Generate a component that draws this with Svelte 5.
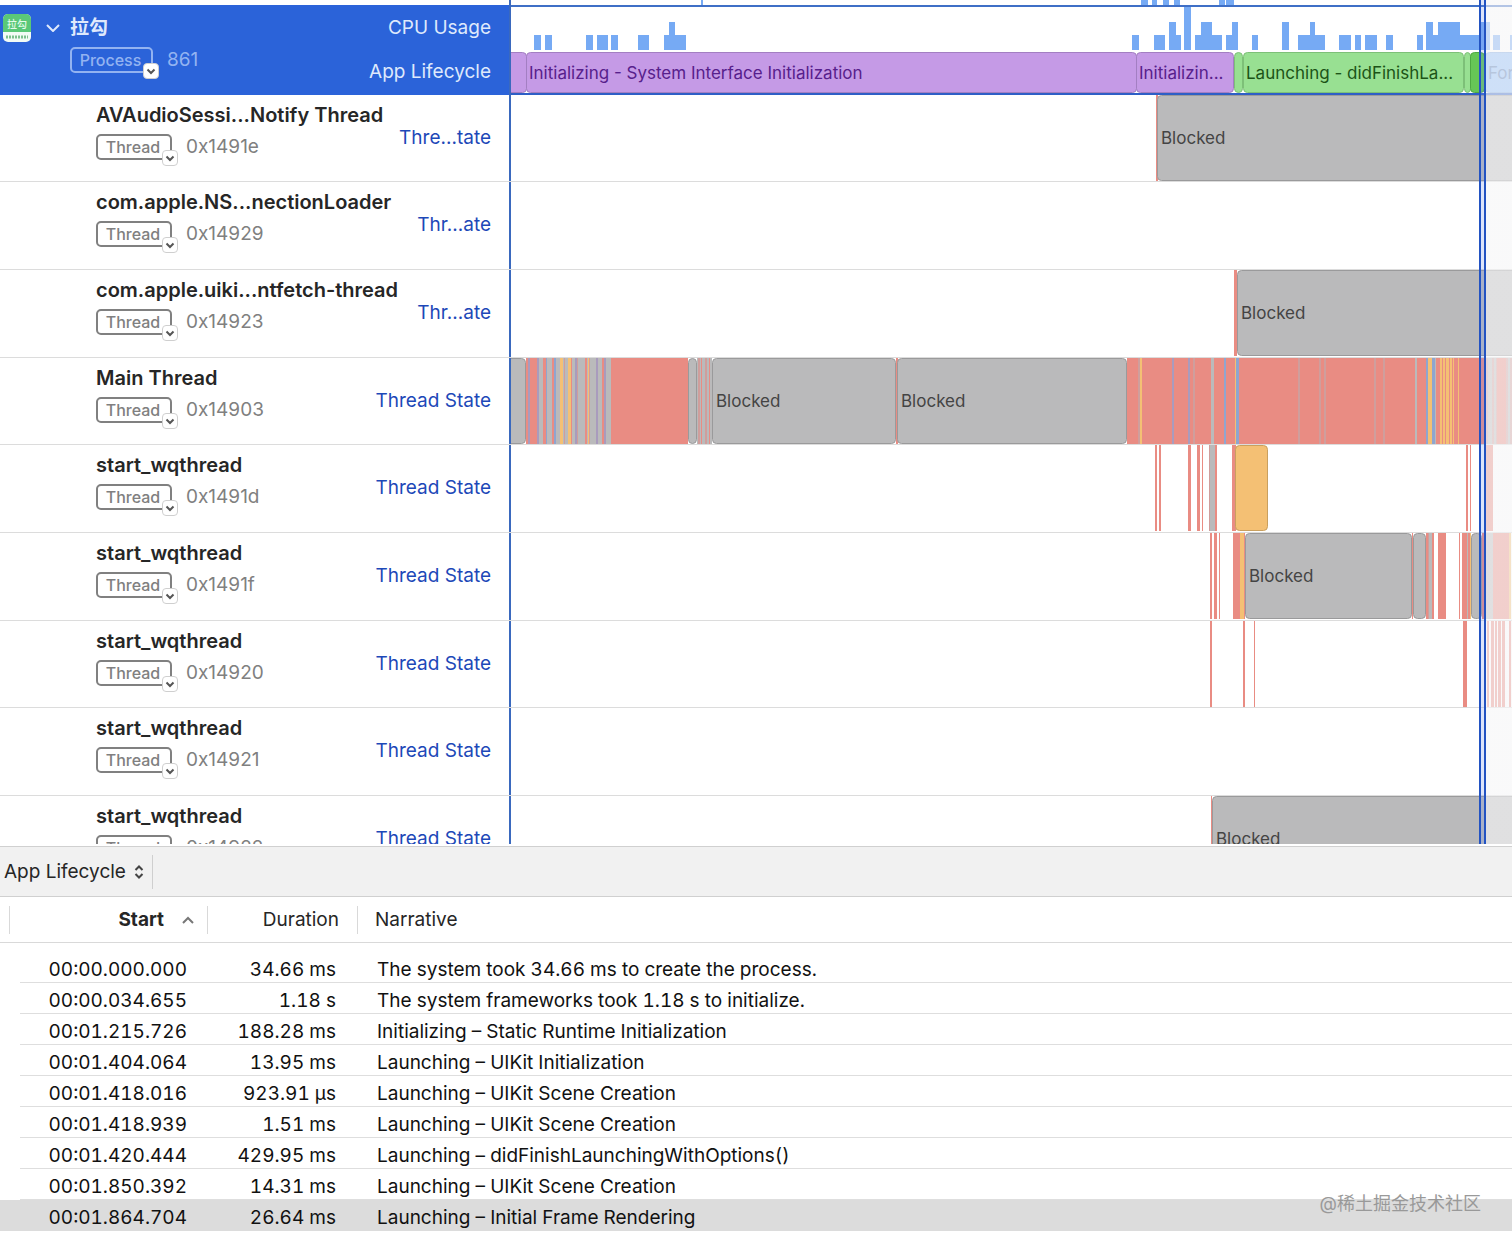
<script>
  // timeline positions are in pixels, the lanes begin right of the label column
  const ORIGIN = 511;
  const LANE_HEIGHT = 86;

  const colors = {
    running: '#e98c83',
    blocked: '#bababb',
    runnable: '#f4c074',
    preempted: '#a99bbd',
    interrupted: '#8fa5cf',
    faint: '#cf9e9c'
  };

  // [x, width, height]
  const cpuBars = [
    [534, 7, 15], [545, 7, 15], [586, 7, 15], [597, 11, 15], [611, 7, 15], [638, 11, 15],
    [664, 22, 15], [669, 6, 28], [1132, 7, 15], [1154, 11, 15], [1169, 7, 28], [1176, 5, 15],
    [1184, 7, 43], [1195, 27, 15], [1201, 11, 28], [1226, 12, 15], [1232, 6, 28], [1252, 6, 15],
    [1282, 7, 28], [1298, 27, 15], [1310, 5, 28], [1339, 12, 15], [1355, 6, 15], [1365, 12, 15],
    [1386, 7, 15], [1417, 6, 15], [1426, 55, 15], [1426, 7, 28], [1438, 22, 28], [1481, 9, 28],
    [1493, 7, 15], [1510, 7, 15]
  ];

  const previousBars = [
    [701, 2], [1141, 7], [1152, 5], [1163, 6], [1174, 6], [1219, 6], [1226, 8]
  ];

  const phases = [
    { x: 505, w: 21, kind: 'init', label: '' },
    { x: 526, w: 610, kind: 'init', label: 'Initializing - System Interface Initialization' },
    { x: 1136, w: 97, kind: 'init', label: 'Initializin...' },
    { x: 1234, w: 8, kind: 'launch', label: '' },
    { x: 1243, w: 220, kind: 'launch', label: 'Launching - didFinishLa...' },
    { x: 1464, w: 6, kind: 'launch', label: '' },
    { x: 1470, w: 14, kind: 'frame', label: '' },
    { x: 1485, w: 400, kind: 'foreground', label: 'Foreground - Active' }
  ];

  // stripes: [x, width, state], blocks: [x, width, state, label]
  const threads = [
    {
      name: 'AVAudioSessi...Notify Thread', id: '0x1491e', state: 'Thre...tate',
      stripes: [[1156, 2, 'running']],
      blocks: [[1157, 800, 'blocked', 'Blocked']]
    },
    { name: 'com.apple.NS...nectionLoader', id: '0x14929', state: 'Thr...ate', stripes: [], blocks: [] },
    {
      name: 'com.apple.uiki...ntfetch-thread', id: '0x14923', state: 'Thr...ate',
      stripes: [[1234, 3, 'running']],
      blocks: [[1237, 800, 'blocked', 'Blocked']]
    },
    {
      name: 'Main Thread', id: '0x14903', state: 'Thread State',
      stripes: [
        [526, 80, 'blocked'],
        [526, 11, 'running'], [528, 2, 'preempted'], [537, 2, 'preempted'], [543, 3, 'running'],
        [546, 1, 'interrupted'], [552, 2, 'running'], [554, 2, 'interrupted'], [560, 3, 'runnable'],
        [564, 1, 'faint'], [568, 3, 'runnable'], [571, 1, 'running'], [575, 3, 'preempted'],
        [577, 1, 'faint'], [585, 2, 'running'], [588, 2, 'runnable'], [589, 1, 'faint'],
        [596, 2, 'preempted'], [602, 2, 'running'], [604, 2, 'preempted'],
        [606, 5, 'blocked'], [611, 77, 'running'],
        [697, 15, 'blocked'], [698, 2, 'faint'], [701, 1, 'running'], [705, 2, 'faint'],
        [709, 1, 'running'], [896, 2, 'running'],
        [1127, 358, 'running'], [1138, 2, 'faint'], [1140, 2, 'runnable'], [1172, 2, 'preempted'],
        [1188, 2, 'preempted'], [1193, 2, 'faint'], [1211, 3, 'blocked'], [1224, 2, 'interrupted'],
        [1235, 1, 'runnable'], [1236, 3, 'interrupted'], [1298, 2, 'faint'], [1319, 2, 'faint'],
        [1324, 2, 'faint'], [1374, 2, 'faint'], [1383, 2, 'faint'], [1415, 2, 'blocked'],
        [1426, 2, 'interrupted'], [1428, 4, 'runnable'], [1432, 3, 'interrupted'], [1435, 1, 'blocked'],
        [1440, 2, 'runnable'], [1443, 2, 'runnable'], [1446, 3, 'runnable'], [1450, 2, 'runnable'],
        [1453, 1, 'runnable'], [1458, 1, 'runnable'], [1486, 26, 'faint'], [1488, 4, 'blocked'],
        [1494, 2, 'blocked'], [1497, 9, 'running'], [1508, 2, 'blocked']
      ],
      blocks: [
        [505, 21, 'blocked', ''], [688, 9, 'blocked', ''],
        [712, 184, 'blocked', 'Blocked'], [897, 230, 'blocked', 'Blocked']
      ]
    },
    {
      name: 'start_wqthread', id: '0x1491d', state: 'Thread State',
      stripes: [
        [1155, 2, 'running'], [1159, 2, 'running'], [1188, 3, 'running'], [1197, 3, 'running'],
        [1202, 1, 'running'], [1209, 6, 'blocked'], [1215, 2, 'running'], [1209, 1, 'faint'],
        [1232, 4, 'running'], [1466, 2, 'running'], [1470, 1, 'running'], [1486, 7, 'running']
      ],
      blocks: [[1235, 33, 'runnable', '']]
    },
    {
      name: 'start_wqthread', id: '0x1491f', state: 'Thread State',
      stripes: [
        [1210, 2, 'running'], [1214, 3, 'running'], [1219, 1, 'running'], [1233, 7, 'running'],
        [1240, 4, 'runnable'], [1244, 1, 'running'], [1412, 1, 'running'], [1426, 2, 'running'],
        [1428, 4, 'blocked'], [1428, 1, 'faint'], [1432, 2, 'running'], [1438, 8, 'running'],
        [1459, 1, 'running'], [1462, 5, 'running'], [1467, 1, 'blocked'], [1468, 2, 'running'],
        [1470, 1, 'runnable'], [1482, 3, 'running'], [1486, 7, 'blocked'], [1493, 16, 'running'],
        [1509, 2, 'runnable']
      ],
      blocks: [
        [1245, 167, 'blocked', 'Blocked'], [1413, 13, 'blocked', ''], [1471, 11, 'blocked', '']
      ]
    },
    {
      name: 'start_wqthread', id: '0x14920', state: 'Thread State',
      stripes: [
        [1210, 2, 'running'], [1243, 2, 'running'], [1254, 1, 'running'], [1463, 4, 'running'],
        [1487, 2, 'running'], [1491, 3, 'running'], [1495, 2, 'running'], [1498, 3, 'running'],
        [1502, 3, 'running'], [1509, 2, 'running']
      ],
      blocks: []
    },
    { name: 'start_wqthread', id: '0x14921', state: 'Thread State', stripes: [], blocks: [] },
    {
      name: 'start_wqthread', id: '0x14922', state: 'Thread State',
      stripes: [[1211, 1, 'running']],
      blocks: [[1212, 800, 'blocked', 'Blocked']]
    }
  ];

  const events = [
    { start: '00:00.000.000', duration: '34.66 ms', narrative: 'The system took 34.66 ms to create the process.' },
    { start: '00:00.034.655', duration: '1.18 s', narrative: 'The system frameworks took 1.18 s to initialize.' },
    { start: '00:01.215.726', duration: '188.28 ms', narrative: 'Initializing – Static Runtime Initialization' },
    { start: '00:01.404.064', duration: '13.95 ms', narrative: 'Launching – UIKit Initialization' },
    { start: '00:01.418.016', duration: '923.91 µs', narrative: 'Launching – UIKit Scene Creation' },
    { start: '00:01.418.939', duration: '1.51 ms', narrative: 'Launching – UIKit Scene Creation' },
    { start: '00:01.420.444', duration: '429.95 ms', narrative: 'Launching – didFinishLaunchingWithOptions()' },
    { start: '00:01.850.392', duration: '14.31 ms', narrative: 'Launching – UIKit Scene Creation' },
    { start: '00:01.864.704', duration: '26.64 ms', narrative: 'Launching – Initial Frame Rendering' }
  ];

  let selected = $state(8);
</script>

{#snippet kindButton(label)}
  <button class="kind">
    {label}
    <svg class="kind-arrow" viewBox="0 0 16 16" aria-hidden="true">
      <rect x="0.5" y="0.5" width="15" height="15" rx="3.5" />
      <path d="M4.5 6.5 8 10l3.5-3.5" />
    </svg>
  </button>
{/snippet}

<div class="instruments">
  <section class="trace">
    <div class="row previous">
      <div class="labels"></div>
      <svg class="lane">
        {#each previousBars as [x, w]}
          <rect x={x - ORIGIN} y="0" width={w} height="5" fill="#76aaf4" />
        {/each}
      </svg>
    </div>

    <div class="row process">
      <div class="labels">
        <svg class="app-icon" viewBox="0 0 28 28" aria-hidden="true">
          <rect width="28" height="28" rx="5" fill="#f2fbf5" />
          <path d="M0 18V5a5 5 0 0 1 5-5h18a5 5 0 0 1 5 5v13z" fill="#5ac878" />
          <text x="14" y="14" text-anchor="middle" font-size="10" font-weight="500" fill="#e4fbea">拉勾</text>
          <path d="M3 23h22" stroke="#7cc18f" stroke-width="3" stroke-dasharray="2 1" />
        </svg>
        <button class="disclosure" aria-label="Collapse process">
          <svg viewBox="0 0 14 8" aria-hidden="true"><path d="m1 1 6 6 6-6" /></svg>
        </button>
        <div class="info">
          <strong>拉勾</strong>
          <div class="meta">{@render kindButton('Process')}<span>861</span></div>
        </div>
        <div class="tracks">
          <span>CPU Usage</span>
          <span>App Lifecycle</span>
        </div>
      </div>
      <svg class="lane">
        {#each cpuBars as [x, w, h]}
          <rect x={x - ORIGIN} y={43 - h} width={w} height={h} fill="#76aaf4" />
        {/each}
        {#each phases as p}
          <g class="phase {p.kind}">
            <rect x={p.x - ORIGIN + 0.5} y="45.5" width={p.w} height="40" rx="4" />
            <text x={p.x - ORIGIN + 3} y="72">{p.label}</text>
          </g>
        {/each}
      </svg>
    </div>

    {#each threads as t}
      <div class="row thread">
        <div class="labels">
          <div class="info">
            <strong>{t.name}</strong>
            <div class="meta">{@render kindButton('Thread')}<span>{t.id}</span></div>
          </div>
          <a class="state" href="#thread-state">{t.state}</a>
        </div>
        <svg class="lane">
          {#each t.stripes as [x, w, state]}
            <rect x={x - ORIGIN} y="0" width={w} height={LANE_HEIGHT} fill={colors[state]} />
          {/each}
          {#each t.blocks as [x, w, state, label]}
            <rect class="block {state}" x={x - ORIGIN + 0.5} y="0.5" width={w - 1} height={LANE_HEIGHT - 1} rx="4" fill={colors[state]} />
            <text class="block-label" x={x - ORIGIN + 4} y="49">{label}</text>
          {/each}
        </svg>
      </div>
    {/each}

    <div class="playhead"></div>
  </section>

  <section class="detail">
    <div class="toolbar">
      <label class="picker">
        <select aria-label="Detail view">
          <option>App Lifecycle</option>
        </select>
        <svg viewBox="0 0 10 14" aria-hidden="true"><path d="M1.5 5 5 1.5 8.5 5M1.5 9 5 12.5 8.5 9" /></svg>
      </label>
    </div>

    <table>
      <colgroup>
        <col class="col-start" />
        <col class="col-duration" />
        <col />
      </colgroup>
      <thead>
        <tr>
          <th class="start sorted">
            <div>Start <svg viewBox="0 0 12 8" aria-hidden="true"><path d="m1 7 5-5 5 5" /></svg></div>
          </th>
          <th class="duration"><div>Duration</div></th>
          <th class="narrative"><div>Narrative</div></th>
        </tr>
      </thead>
      <tbody>
        {#each events as e, i}
          <tr class:selected={selected === i} onclick={() => (selected = i)}>
            <td class="start">{e.start}</td>
            <td class="duration">{e.duration}</td>
            <td class="narrative">{e.narrative}</td>
          </tr>
        {/each}
      </tbody>
    </table>
    <div class="watermark">@稀土掘金技术社区</div>
  </section>
</div>

<style>
  :global(body) { margin: 0; background: #fff; }

  .instruments {
    display: flex;
    flex-direction: column;
    height: 100vh;
    overflow: hidden;
    font-family: Inter, "Noto Sans CJK SC", sans-serif;
    font-size: 19px;
    line-height: 24px;
    color: #262626;
  }
  button, select { font: inherit; color: inherit; background: none; border: 0; padding: 0; margin: 0; }
  svg { display: block; }

  /* trace */
  .trace { position: relative; flex: 1; min-height: 0; overflow: hidden; }
  .row { display: flex; box-sizing: border-box; height: 88px; }
  .labels { display: flex; flex: none; box-sizing: border-box; width: 511px; border-right: 2px solid #3a69be; }
  .lane { flex: 1; min-width: 0; height: 100%; overflow: hidden; }
  .info { flex: 1; min-width: 0; }
  .info strong { display: block; font-size: 20px; font-weight: 600; white-space: nowrap; }
  .meta { display: flex; gap: 14px; color: #808080; }

  .previous { height: 5px; }

  .process { height: 90px; }
  .process .labels { background: #2b63d9; color: #dfe9fc; padding: 9px 18px 0 3px; }
  .process .lane { box-sizing: border-box; border-top: 2px solid #3f6fc6; border-bottom: 2px solid #2e5fc6; }
  .process .info strong { font-size: 19px; font-weight: 700; }
  .process .meta { color: #93b3f1; }
  .process .kind { width: 83px; border-color: #93b3f1; }
  .app-icon { width: 28px; height: 28px; }
  .disclosure { display: flex; align-items: center; width: 14px; height: 24px; margin: 2px 10px 0 15px; }
  .disclosure svg { width: 14px; height: 8px; fill: none; stroke: #dfe9fc; stroke-width: 2; }
  .process .info, .tracks { padding-top: 2px; }
  .tracks { display: flex; flex-direction: column; gap: 20px; text-align: right; }

  .thread { border-bottom: 1px solid #dcdcdc; }
  .thread:nth-child(3n) { height: 87px; }
  .thread .labels { align-items: flex-start; padding: 8px 18px 0 96px; }
  .state { color: #1d48b8; text-decoration: none; margin-top: 23px; }

  .kind {
    position: relative;
    box-sizing: border-box;
    width: 76px;
    height: 26px;
    margin-top: 7px;
    padding-right: 2px;
    border: 2px solid #808080;
    border-radius: 5px;
    font-size: 16px;
    line-height: 22px;
    font-weight: 500;
  }
  .meta span { margin-top: 8px; }
  .kind-arrow { position: absolute; right: -8px; bottom: -8px; width: 16px; height: 16px; }
  .kind-arrow rect { fill: #fff; stroke: #cfcfcf; }
  .kind-arrow path { fill: none; stroke: #555; stroke-width: 2; }

  .phase text { font-size: 17px; }
  .init rect { fill: #c59ae6; stroke: #a37fc2; }
  .init text { fill: #57208c; }
  .launch rect { fill: #98e092; stroke: #7dc078; }
  .launch text { fill: #1c5417; }
  .frame rect { fill: #66c656; stroke: #4fa843; }
  .foreground rect { fill: #8abaf8; stroke: #7aa5df; }
  .foreground text { fill: #4a72b0; }
  .block { stroke: #9a9a9b; }
  .block.runnable { stroke: #c9a05f; }
  .block-label { font-size: 17px; fill: #444; }

  .playhead {
    position: absolute;
    top: 0;
    bottom: 0;
    left: 1479px;
    right: 0;
    background: linear-gradient(90deg,
      #2353c2 0 2px, rgba(120, 150, 235, 0.25) 2px 5px, #2353c2 5px 7px, rgba(246, 246, 247, 0.63) 7px);
  }

  /* detail */
  .detail { position: relative; flex: none; padding: 2px 0 14px; background: #fff; }
  .toolbar {
    display: flex;
    align-items: center;
    height: 49px;
    background: #f1f1f1;
    border-top: 1px solid #d0d0d0;
    border-bottom: 1px solid #d0d0d0;
  }
  .picker { display: flex; align-items: center; gap: 8px; height: 34px; padding: 0 8px 0 4px; border-right: 1px solid #cfcfcf; }
  .picker select { appearance: none; }
  .picker svg { width: 10px; height: 14px; fill: none; stroke: #444; stroke-width: 2; }

  table { width: 100%; border-collapse: separate; border-spacing: 0; table-layout: fixed; }
  .col-start { width: 207px; }
  .col-duration { width: 150px; }
  th { height: 45px; padding: 0; font-weight: 400; border-bottom: 1px solid #d9d9d9; }
  th div { display: flex; align-items: center; height: 28px; border-left: 1px solid #d9d9d9; }
  th.start div { justify-content: flex-end; gap: 18px; margin-left: 9px; padding-right: 13px; }
  th.duration div { justify-content: flex-end; padding-right: 18px; }
  th.narrative div { padding-left: 17px; }
  th.sorted { font-weight: 700; }
  th svg { width: 12px; height: 8px; fill: none; stroke: #777; stroke-width: 2; }

  tbody { color: #111; font-variant-numeric: tabular-nums; }
  tbody::before { content: ''; display: block; height: 9px; }
  td { box-sizing: border-box; height: 31px; padding: 6px 0 1px; white-space: nowrap; }
  td.start { text-align: right; padding-right: 20px; }
  td.duration { text-align: right; padding-right: 21px; }
  td.narrative { padding-left: 20px; }
  tbody tr { background: linear-gradient(#dedede, #dedede) 20px 100% / 100% 1px no-repeat; }
  tbody tr.selected { background: #dcdcdc; }

  .watermark { position: absolute; right: 31px; bottom: 29px; font-size: 18px; color: #999; }
</style>
